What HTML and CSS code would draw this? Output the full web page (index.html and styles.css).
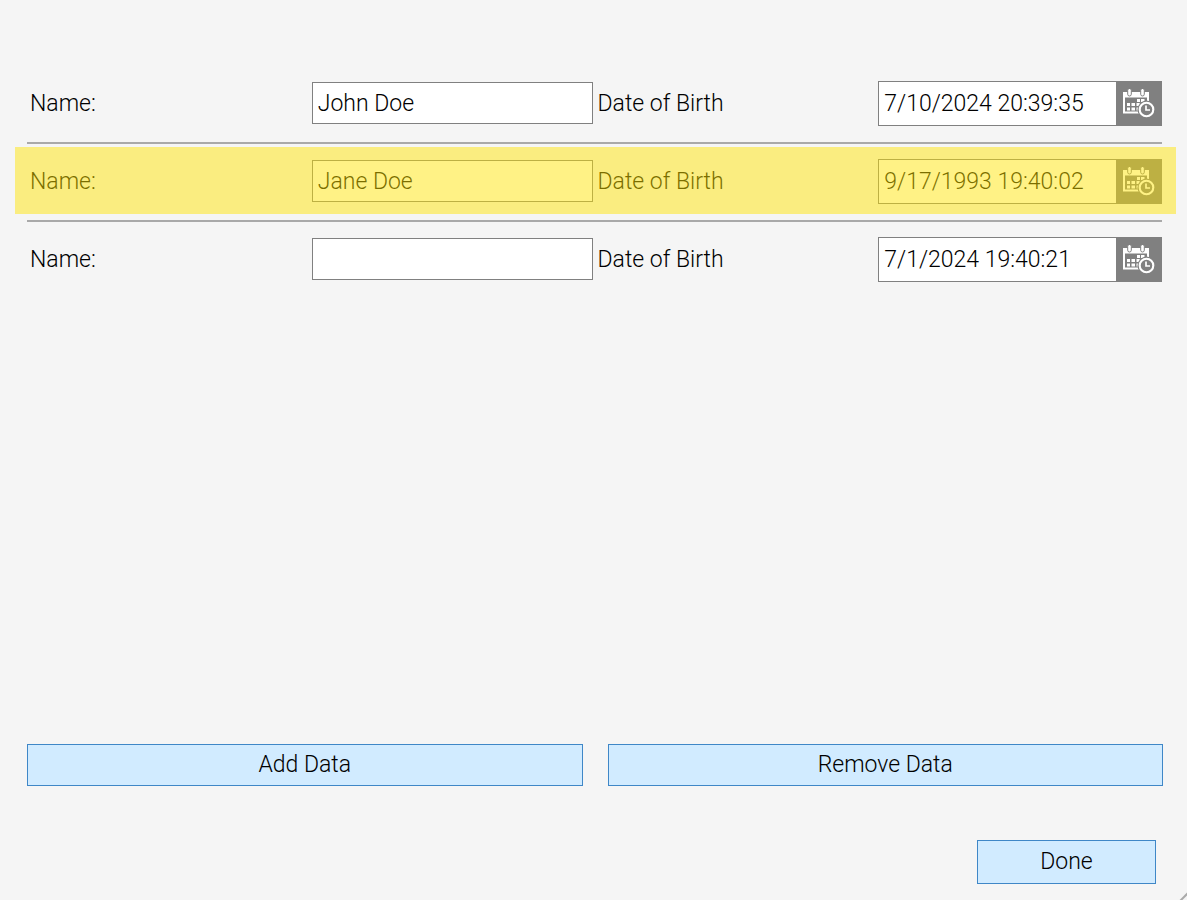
FILE: index.html
```html
<!DOCTYPE html>
<html lang="en">
<head>
<meta charset="utf-8">
<meta name="viewport" content="width=device-width, initial-scale=1">
<title>People</title>
<link rel="stylesheet" href="styles.css">
</head>
<body>
<svg class="defs" aria-hidden="true">
  <symbol id="calendar" viewBox="0 0 32 30">
    <path d="M0 3h26v5.500H0z" fill="#fff"/>
    <path d="M1 8v15.500h19M25 8v5" fill="none" stroke="#fff" stroke-width="2"/>
    <path d="M14 10h3v3h-3zM18 10h3.500v3H18zM4 14h3v3H4zM8.500 14h3.500v3H8.500zM13.500 14h3.500v3h-3.500zM4 18.500h3v3H4zM8.500 18.500h3.500v3H8.500zM13.500 18.500h3.500v3h-3.500z" fill="#fff"/>
    <rect x="4.700" y="-.5" width="3.600" height="7.500" rx="1.800" fill="#fff" stroke="#808080" stroke-width="1"/>
    <rect x="17.700" y="-.5" width="3.600" height="7.500" rx="1.800" fill="#fff" stroke="#808080" stroke-width="1"/>
    <circle cx="23.500" cy="20.500" r="9" fill="#808080"/>
    <circle cx="23.500" cy="20.500" r="6.800" fill="none" stroke="#fff" stroke-width="2.100"/>
    <path d="M23 16.500v4.500h4" fill="none" stroke="#fff" stroke-width="1.700"/>
  </symbol>
</svg>
<main class="page">
  <section class="records">
    <div class="record">
      <label class="label" for="name1">Name:</label>
      <input class="field name" id="name1" type="text" value="John Doe">
      <label class="label" for="date1">Date of Birth</label>
      <div class="date">
        <input class="field date-field" id="date1" type="text" value="7/10/2024 20:39:35">
        <button class="picker" type="button" aria-label="Pick date"><svg class="icon"><use href="#calendar"/></svg></button>
      </div>
    </div>
    <div class="record selected">
      <label class="label" for="name2">Name:</label>
      <input class="field name" id="name2" type="text" value="Jane Doe">
      <label class="label" for="date2">Date of Birth</label>
      <div class="date">
        <input class="field date-field" id="date2" type="text" value="9/17/1993 19:40:02">
        <button class="picker" type="button" aria-label="Pick date"><svg class="icon"><use href="#calendar"/></svg></button>
      </div>
    </div>
    <div class="record">
      <label class="label" for="name3">Name:</label>
      <input class="field name" id="name3" type="text" value="">
      <label class="label" for="date3">Date of Birth</label>
      <div class="date">
        <input class="field date-field" id="date3" type="text" value="7/1/2024 19:40:21">
        <button class="picker" type="button" aria-label="Pick date"><svg class="icon"><use href="#calendar"/></svg></button>
      </div>
    </div>
  </section>
  <div class="actions">
    <button class="button" type="button">Add Data</button>
    <button class="button" type="button">Remove Data</button>
  </div>
  <footer class="footer">
    <button class="button done" type="button">Done</button>
  </footer>
</main>
<svg class="grip" viewBox="0 0 8 8" aria-hidden="true"><path d="M1 9L9 1" stroke="#aaa" stroke-width="2"/></svg>
</body>
</html>
```
FILE: styles.css
```css
* {
  box-sizing: border-box;
}

body {
  margin: 0;
  background: #f5f5f5;
  color: #000;
  font: 300 23px/28px Roboto, sans-serif;
}

.defs {
  display: none;
}

.page {
  display: flex;
  flex-direction: column;
  min-height: 100vh;
  padding: 66px 24px 16px 27px;
}

.records {
  flex: 1;
  padding-right: 1px;
}

.record {
  position: relative;
  display: grid;
  grid-template-columns: repeat(4, minmax(0, 1fr));
  align-items: center;
  padding: 15px 0 16px;
  border-bottom: 2px solid #a9a9a9;
}

.record:last-child {
  border-bottom: 0;
}

.selected::after {
  content: "";
  position: absolute;
  inset: 3px -14px 6px -12px;
  background: rgba(255, 228, 0, 0.48);
  pointer-events: none;
}

.label {
  padding-left: 3px;
}

.field {
  min-width: 0;
  padding: 0 5px;
  border: 1px solid #808080;
  border-radius: 0;
  background: #fff;
  color: inherit;
  font: inherit;
}

.name {
  height: 42px;
  margin: 0 2px 1px 1px;
}

.date {
  display: flex;
  height: 45px;
}

.date-field {
  flex: 1;
  border-right: 0;
}

.picker {
  display: flex;
  align-items: center;
  justify-content: center;
  width: 46px;
  padding: 0;
  border: 0;
  background: #808080;
}

.icon {
  width: 32px;
  height: 30px;
}

.actions {
  display: grid;
  grid-template-columns: 1fr 1fr;
  gap: 25px;
}

.button {
  height: 42px;
  padding: 0 16px;
  border: 1px solid #3f87c7;
  border-radius: 0;
  background: #d1ebff;
  color: inherit;
  font: inherit;
}

.footer {
  display: flex;
  justify-content: flex-end;
  padding: 54px 7px 0 0;
}

.done {
  width: 179px;
  height: 44px;
}

.grip {
  position: fixed;
  right: 0;
  bottom: 0;
  width: 8px;
  height: 8px;
}
```
